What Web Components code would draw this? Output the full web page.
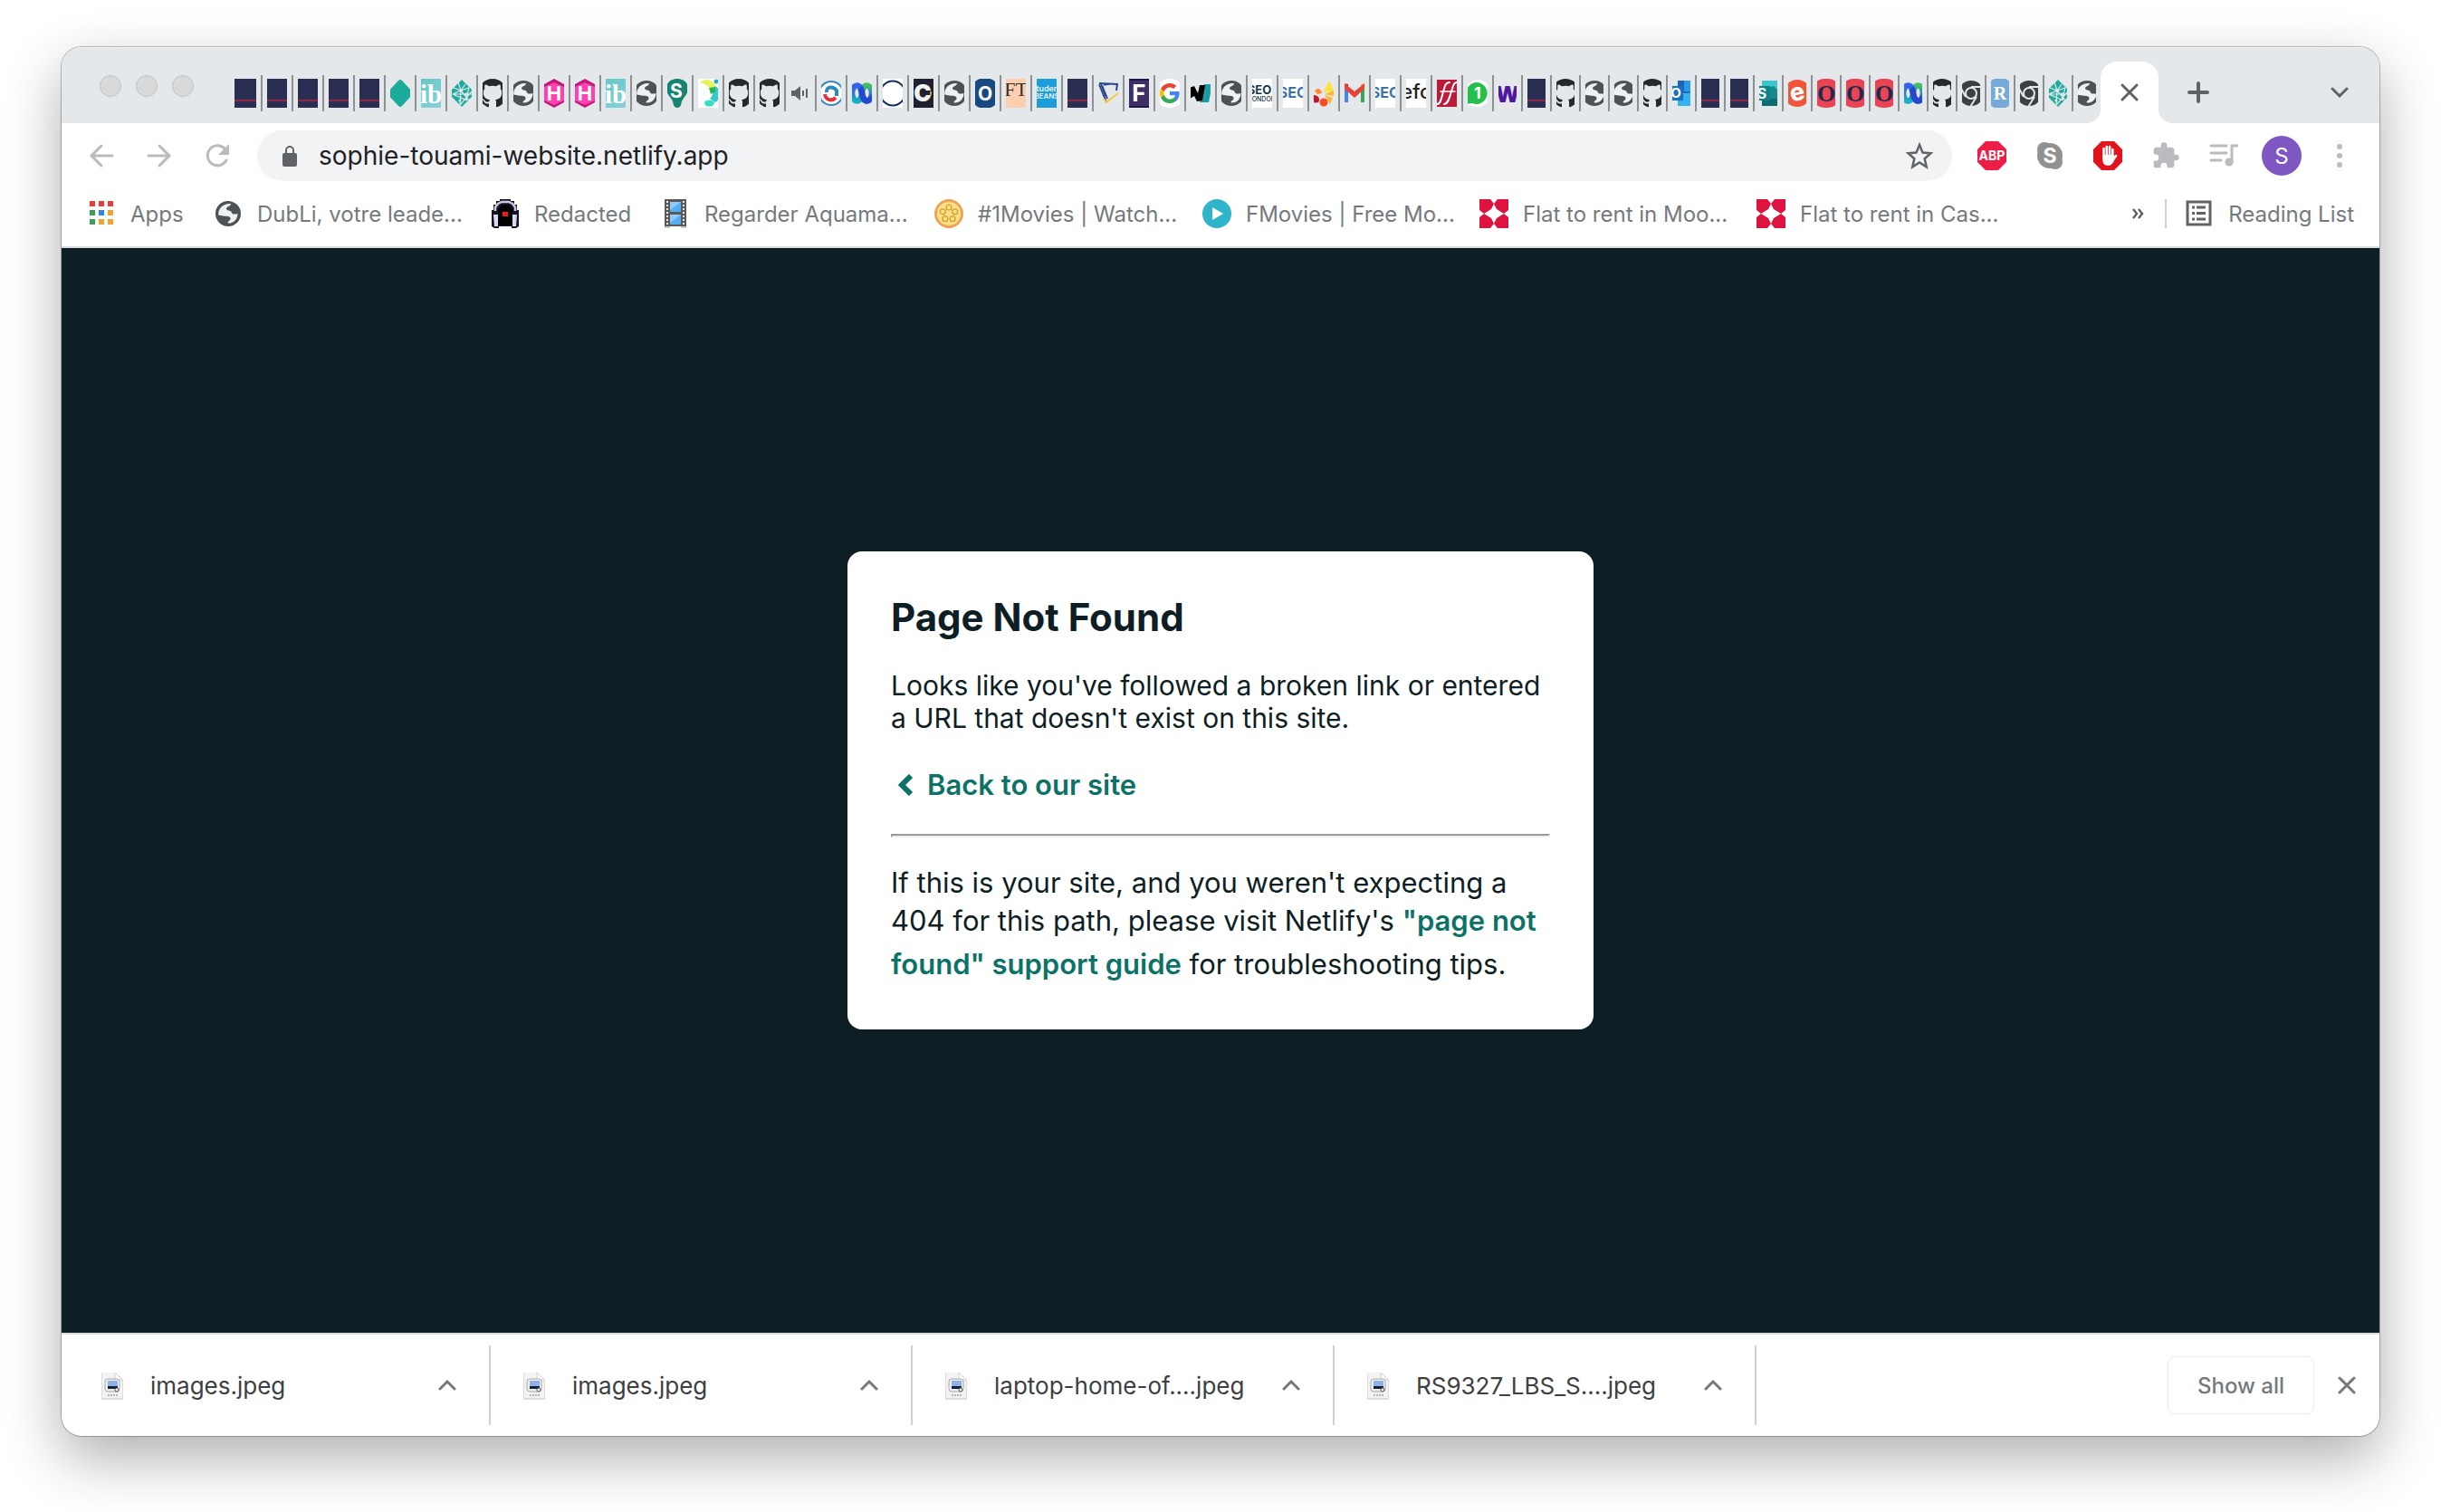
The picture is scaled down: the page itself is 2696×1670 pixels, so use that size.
<!DOCTYPE html>
<html lang="en">
<head>
<meta charset="utf-8">
<title>Page Not Found</title>
<style>
  body { margin: 0; background: #fff; font-family: Inter, "Liberation Sans", sans-serif; color: #0e1e25; }
</style>
</head>
<body>
<browser-window>
  <tab-strip slot="top"></tab-strip>
  <tool-bar slot="top" url="sophie-touami-website.netlify.app"></tool-bar>
  <bookmarks-bar slot="top">
    <book-mark icon="apps" style="--w:140px">Apps</book-mark>
    <book-mark icon="globe" style="--w:306px">DubLi, votre leade...</book-mark>
    <book-mark icon="robot" style="--w:188px">Redacted</book-mark>
    <book-mark icon="film" style="--w:302px">Regarder Aquama...</book-mark>
    <book-mark icon="reel" style="--w:296px">#1Movies | Watch...</book-mark>
    <book-mark icon="play" style="--w:306px">FMovies | Free Mo...</book-mark>
    <book-mark icon="flat" style="--w:306px">Flat to rent in Moo...</book-mark>
    <book-mark icon="flat" style="--w:306px">Flat to rent in Cas...</book-mark>
  </bookmarks-bar>
  <error-card>
    <span slot="title">Page Not Found</span>
    <span slot="lead">Looks like you've followed a broken link or entered a URL that doesn't exist on this site.</span>
    <span slot="back">Back to our site</span>
  </error-card>
  <download-shelf slot="bottom">
    <download-item>images.jpeg</download-item>
    <download-item>images.jpeg</download-item>
    <download-item>laptop-home-of....jpeg</download-item>
    <download-item>RS9327_LBS_S....jpeg</download-item>
  </download-shelf>
</browser-window>

<script>
const T = (x, y, size, fill, text, extra = '') =>
  `<text x="${x}" y="${y}" font-size="${size}" fill="${fill}" text-anchor="middle" ${extra}>${text}</text>`;
const SANS = 'font-family="Inter, sans-serif" font-weight="700"';
const SERIF = 'font-family="Liberation Serif, serif"';

const ICONS = {
  navy: `<path fill="#292e52" d="M0 0h32v32H0z"/><path fill="#8f2547" d="M0 23h32v2H0z"/>`,
  diamond: `<path fill="#1aab9b" d="M16 1q1 0 2 1l12 13q1 1 0 2L18 30q-2 2-4 0L2 17q-1-1 0-2L14 2q1-1 2-1z"/>`,
  ib: `<defs><linearGradient id="g" x1="0" y1="0" x2="1" y2="1"><stop stop-color="#5fc9c5"/><stop offset="1" stop-color="#8fd0dc"/></linearGradient></defs><path fill="url(#g)" d="M0 0h32v32H0z"/>` + T(16, 27, 29, '#fff', 'ib', SERIF + ' font-weight="700"'),
  netlify: `<path fill="#20a99e" d="M16 1 31 16 16 31 1 16z"/><path fill="none" stroke="#e4e8ea" stroke-width="1.200" d="m12 4 3 9 9-3M15 13l-9 4 22 0M15 13l10 12M15 13l-1 16M6 17l16 7M14 29l13-15M20 6l-5 7-8-3M24 9l-3 15"/><circle cx="15" cy="13" r="1.800" fill="#e4e8ea"/><circle cx="21" cy="17" r="1.800" fill="#e4e8ea"/><circle cx="14" cy="24" r="1.500" fill="#e4e8ea"/>`,
  github: `<path fill="#24292e" transform="scale(2)" d="M8 0C3.580 0 0 3.580 0 8c0 3.540 2.290 6.530 5.470 7.590.4.070.55-.17.55-.38 0-.19-.01-.82-.01-1.490-2.010.37-2.530-.49-2.690-.94-.09-.23-.48-.94-.82-1.130-.28-.15-.68-.52-.01-.53.63-.01 1.080.58 1.230.82.72 1.210 1.870.87 2.330.66.07-.52.28-.87.51-1.070-1.780-.2-3.640-.89-3.640-3.950 0-.87.31-1.590.82-2.150-.08-.2-.36-1.020.08-2.120 0 0 .67-.21 2.200.82.64-.18 1.320-.27 2-.27s1.360.09 2 .27c1.530-1.040 2.200-.82 2.200-.82.44 1.100.16 1.920.08 2.120.51.56.82 1.270.82 2.150 0 3.070-1.870 3.750-3.650 3.950.29.25.54.73.54 1.480 0 1.070-.01 1.930-.01 2.200 0 .21.15.46.55.38A8.010 8.010 0 0 0 16 8c0-4.420-3.580-8-8-8z"/>`,
  globe: `<circle cx="16" cy="16" r="14" fill="#4d5257"/><path fill="#eef0f1" d="M5.300 17.500C4.500 10 11 4 19 5c0 3-5 3-5 5.500 0 2.500 5 1.500 5.500 3.500.5 3 3.500 3 7 2 0 6-4.500 11-10.800 10.500-.7-2.500 3.300-2.500 2.800-5.500-.5-3-5.500-1.500-13.200-3.500z"/>`,
  hex: `<path fill="#c4177b" d="M16 0 29 7v18L16 32 3 25V7z"/><path fill="#ff41b0" d="M16 4 29 10v13l-13 6L3 23V10z"/>` + T(16, 24, 22, '#fff', 'H', SANS),
  pinS: `<path fill="#178473" d="M16 0C9 0 4 4 4 11c0 6 5 9 7 14 1 5 2 7 5 7s4-2 5-7c2-5 7-8 7-14C28 4 23 0 16 0z"/>` + T(15, 21, 21, '#fff', 'S', SANS),
  splash: `<path fill="#fff" d="M0 0h32v32H0z"/><path fill="#e8f35c" d="M7 4C13-2 23 1 25 10l-6 4C18 8 13 6 7 4z"/><path fill="#35c7c9" d="M24 8c7 4 7 14 0 18l-6-4c3-3 4-7 3-10z"/><path fill="#27b84f" d="m17 10 7-1 0 5-5 3z"/><path fill="#38dfc2" d="M14 24q8-2 9 3-2 5-9 3-4-4 0-6z"/><circle cx="25" cy="3" r="2.500" fill="#25aac9"/>`,
  speaker: `<path fill="#5f6368" d="M6 13h4l6-5v16l-6-5H6z"/><path stroke="#5f6368" stroke-width="2" d="M19 13v6M23 11v10"/>`,
  swirl: `<circle cx="16" cy="16" r="14" fill="#3887bd"/><circle cx="16" cy="16" r="12" fill="#fff"/><path fill="none" stroke="#2e8cc0" stroke-width="4" d="M11 15c-1-7 8-7 11-2v6"/><path fill="none" stroke="#e8303a" stroke-width="4" d="M9 17c1 7 8 8 12 4"/>`,
  webex: `<defs><linearGradient id="a" x1="0" y1="0" x2="0" y2="1"><stop stop-color="#2f63f0"/><stop offset=".5" stop-color="#2a78e0"/><stop offset="1" stop-color="#17b3c4"/></linearGradient><linearGradient id="b" x1="0" y1="0" x2="0" y2="1"><stop stop-color="#45bd62"/><stop offset=".45" stop-color="#2f8fb0"/><stop offset=".7" stop-color="#2450d8"/><stop offset="1" stop-color="#2349cf"/></linearGradient></defs><ellipse cx="21.500" cy="16" rx="5.500" ry="8.500" fill="none" stroke="url(#b)" stroke-width="6.500"/><ellipse cx="10.500" cy="16" rx="5.500" ry="8.500" fill="none" stroke="url(#a)" stroke-width="6.500"/><path fill="none" stroke="#2349cf" stroke-width="6.500" d="M14 10c3 4 1 14 8 14.500"/>`,
  ring: `<path fill="#fff" d="M0 0h32v32H0z"/><circle cx="16" cy="16" r="13.500" fill="none" stroke="#12305f" stroke-width="2"/>`,
  cdark: `<path fill="#1f2030" d="M0 0h32v32H0z"/>` + T(15, 25, 26, '#f3f1ee', 'C', 'font-family="Inter" font-weight="900"') + `<path fill="#b99b62" d="M23 14h2v4h-2z"/>`,
  oblue: `<circle cx="16" cy="16" r="17" fill="#174a82"/>` + T(16, 24, 21, '#fff', 'O', SANS),
  ft: `<path fill="#fccfb1" d="M0 0h32v32H0z"/>` + T(16, 19, 22, '#33302e', 'FT', SERIF),
  student: `<path fill="#1b9dd9" d="M0 0h32v32H0z"/>` + T(16, 14, 9, '#fff', 'student', 'font-family="Inter" font-weight="500"') + T(16, 22, 8, '#fff', 'BEANS', 'font-family="Inter" font-weight="500"'),
  book: `<path fill="none" stroke="#2b478c" stroke-width="2" d="m6 5 20 1-1 7M6 6l8 20M9 7l6 15"/><path fill="none" stroke="#2b478c" stroke-width="1.500" d="m8 6 5 13M11 7l6-1"/><path fill="none" stroke="#f2c94c" stroke-width="2" d="m11 22 3 4 13-10"/>`,
  fdark: `<path fill="#3d2f66" d="M0 0h32v32H0z"/><path fill="#1f1645" d="M0 0h32v2H0zM0 30h32v2H0z"/>` + T(16, 25, 26, '#fff', 'F', SANS),
  google: `<circle cx="16" cy="16" r="16" fill="#fff"/><g transform="translate(4 4)"><path fill="#4285F4" d="M22.560 12.250c0-.78-.07-1.530-.2-2.250H12v4.260h5.920c-.26 1.370-1.040 2.530-2.210 3.310v2.770h3.570c2.080-1.920 3.280-4.740 3.280-8.090z"/><path fill="#34A853" d="M12 23c2.970 0 5.460-.98 7.280-2.660l-3.570-2.770c-.98.66-2.230 1.060-3.710 1.060-2.860 0-5.290-1.930-6.160-4.530H2.180v2.840C3.990 20.530 7.700 23 12 23z"/><path fill="#FBBC05" d="M5.840 14.090c-.22-.66-.35-1.360-.35-2.090s.13-1.430.35-2.090V7.070H2.180C1.430 8.550 1 10.220 1 12s.43 3.450 1.180 4.930z"/><path fill="#EA4335" d="M12 5.380c1.620 0 3.060.56 4.210 1.640l3.150-3.150C17.450 2.090 14.970 1 12 1 7.700 1 3.990 3.470 2.180 7.070l3.660 2.840c.87-2.600 3.300-4.530 6.160-4.530z"/></g>`,
  wteal: `<path fill="#1a9ba3" d="M20 6h9l-4 20H15z"/><path fill="#000" d="M4 10l5-2 4 8 2-9h6l-3 17-6 1-3-6-5 3z"/>`,
  seol: `<path fill="#fff" d="M0 0h32v32H0z"/>` + T(13, 17, 13, '#17364a', 'SEO', SANS) + T(16, 25, 7, '#17364a', 'LONDON', 'font-family="Inter" font-weight="500"'),
  seo: `<path fill="#fff" d="M0 0h32v32H0z"/>` + T(16, 21, 16, '#3b73ad', 'SEO', SANS),
  fruit: `<path fill="#ffe23d" d="m22 2 5 11-12 2z"/><path fill="#ffb92e" d="m17 17 11-5q1 6-2 7zM17 18l9 3-3 7z"/><path fill="#ff8a33" d="M6 13q6-5 8 3l-5 1z"/><circle cx="16" cy="26" r="4.500" fill="#ff4b23"/><path fill="#c4152d" d="M3 18q8 0 8 5t-6 3z"/>`,
  gmail: `<path fill="#4285f4" d="M4 9h5v17H4z"/><path fill="#34a853" d="M23 9h5v17h-5z"/><path fill="#fbbc04" d="M23 6q5-2 5 4l-5 4z"/><path fill="#c5221f" d="M4 10q0-6 5-4v8z"/><path fill="#ea4335" d="m5 5 11 9L27 5v6L16 21 5 11z"/>`,
  efc: `<path fill="#fff" d="M0 0h32v32H0z"/>` + T(16, 22, 22, '#222', 'efc', 'font-family="Inter" font-weight="500"'),
  ff: `<path fill="#bd1a38" d="M0 1h32v30H0z"/><g fill="none" stroke="#fff" stroke-linecap="round"><path stroke-width="2" d="M5 28c5 0 5-9 8-17 1-5 3-7 6-7M13 28c5 0 6-9 9-17 1-5 3-7 5-7"/><path stroke-width="1.500" d="M9 14h16"/></g>`,
  whatsapp: `<path fill="#fff" d="M16 1a15 15 0 1 1-8 28l-6 2V16A15 15 0 0 1 16 1z"/><path fill="#25c04b" d="M16 4a12 12 0 1 1-6 23l-6 1 1-6A12 12 0 0 1 16 4z"/>` + T(16, 22, 18, '#fff', '1', SANS),
  wpurple: T(16, 26, 25, '#5017a0', 'W', 'font-family="Inter" font-weight="900"'),
  outlook: `<path fill="#1c66b5" d="M12 2h18v14H12z"/><path fill="#2b9be6" d="M19 2h11v12H19z"/><path fill="#35b3f1" d="M12 17l18-2v15H12z"/><path fill="#1571c2" d="M0 8h18v16H0z"/>` + T(10, 21, 15, '#fff', 'O', SANS),
  sway: `<path fill="#3ec6cf" d="M9 2h21v14H9z"/><path fill="#17898c" d="M9 13l13-5 8 8v8H9z"/><path fill="#0d6c70" d="M9 22h21v8H9z"/><path fill="#0a8387" d="M0 8h18v16H0z"/>` + T(9, 22, 16, '#fff', 'S', SANS),
  ered: `<circle cx="16" cy="16" r="15" fill="#f05537"/>` + T(16, 24, 27, '#fff', 'e', 'font-family="Inter" font-weight="800" transform="rotate(-12 16 16)"'),
  ored: `<rect width="32" height="32" rx="14" fill="#ea4453"/>` + T(16, 25, 26, '#222850', 'O', SERIF + ' font-weight="700"'),
  chrome: `<circle cx="16" cy="16" r="14" fill="#3c4043"/><path fill="none" stroke="#e4e8ea" stroke-width="2" d="M16 9h13M10 20 4 9M22 20l-7 11"/><circle cx="16" cy="16" r="7" fill="#e4e8ea"/><circle cx="16" cy="16" r="5" fill="#3c4043"/>`,
  rblue: `<circle cx="16" cy="16" r="17" fill="#75aadb"/>` + T(16, 23, 20, '#fff', 'R', SERIF + ' font-weight="700"'),

  apps: ['#e53e3e','#e53e3e','#e53e3e','#3d9c5b','#2f85e8','#eba52f','#3d9c5b','#eba52f','#eba52f']
    .map((c, i) => `<path fill="${c}" d="M${3 + i % 3 * 10} ${2 + Math.floor(i / 3) * 10}h6v6h-6z"/>`).join(''),
  robot: `<path fill="#15151f" d="M10 0h12v2h4v4h3v6h2v18l-3 2h-5v-2H9v2H4l-3-2V12h2V6h3V2h4z"/><path fill="none" stroke="#c9c8e6" stroke-width="2.500" d="M5 13V9l3-4 4-2h8l4 2 3 4v4"/><path fill="#000" d="M8 12l4-6h8l4 6v17H8z"/><path fill="#d9d8f5" d="M3 17h5v13H4zM24 17h5l-1 13h-4z"/><path fill="#f01818" d="M13 14h6v5h-6z"/>`,
  film: `<path fill="#5b5856" d="M4 0h24v30H4z"/><path fill="#56aef2" d="M10 3h12v11H10zM10 17h12v11H10z"/><path fill="#8fcbfa" d="M10 3h12L10 12zM10 17h12L10 26z"/><path stroke="#e8e8e8" stroke-width="2" stroke-dasharray="2 2" d="M7 2v28M25 2v28"/><path fill="#c9c9c9" d="M4 30h6v2H4zM22 30h6v2h-6z"/>`,
  reel: `<circle cx="16" cy="16" r="14.500" fill="#fbe08a" stroke="#f0a552" stroke-width="3"/><g fill="#f7e36a" stroke="#cf9a3c" stroke-width="1.200"><circle cx="16" cy="9" r="3"/><circle cx="9.300" cy="13.800" r="3"/><circle cx="22.700" cy="13.800" r="3"/><circle cx="11.900" cy="21.700" r="3"/><circle cx="20.100" cy="21.700" r="3"/></g>`,
  play: `<circle cx="16" cy="16" r="16" fill="#2fb4c9"/><path fill="#fff" d="M11 9l12 7-12 7z"/>`,
  flat: `<path fill="#dc143f" d="M0 0h12l4 5 4-5h12v12l-5 4 5 4v12H20l-4-5-4 5H0V20l5-4-5-4z"/><path fill="#fff" d="m16 5 3 6 8 5-8 5-3 6-3-6-8-5 8-5z"/>`,

  back: `<path class="l" d="M28 16H5M16 5 5 16l11 11"/>`,
  forward: `<path class="l" d="M4 16h23M16 5l11 11-11 11"/>`,
  reload: `<path class="l" d="M26 21a11 11 0 1 1-2-13"/><path fill="currentColor" d="M29 3v12H17z"/>`,
  lock: `<rect x="8" y="13" width="16" height="15" rx="2" fill="currentColor"/><path fill="none" stroke="currentColor" stroke-width="2" d="M12 13v-3a4 4 0 0 1 8 0v3"/>`,
  star: `<path fill="none" stroke="currentColor" stroke-width="2.500" d="m16 4 3.500 8.500 9 .8-6.800 6 2 9L16 23.500 8.300 28.300l2-9-6.800-6 9-.8z"/>`,
  abp: `<path fill="#ed1e45" d="M9 0h14l9 9v14l-9 9H9l-9-9V9z"/>` + T(16, 21, 14, '#fff', 'ABP', SANS),
  skype: `<g fill="#919191"><circle cx="16" cy="16" r="14"/><circle cx="10" cy="9" r="8"/><circle cx="22" cy="23" r="8"/></g>` + T(16, 24, 23, '#fff', 'S', SANS),
  hand: `<path fill="#e3131b" d="M9 0h14l9 9v14l-9 9H9l-9-9V9z"/><path fill="none" stroke="#fff" stroke-width="2.600" stroke-linecap="round" d="M11.500 18V8M14.800 17V6M18.100 17V6M21.300 18V9M21 22l4-6"/><path fill="#fff" d="M10.200 15h12.400l.4 4q-1 8-7 8-5.800 0-5.800-7z"/>`,
  puzzle: `<path fill="currentColor" transform="scale(1.333)" d="M20.500 11H19V7c0-1.100-.9-2-2-2h-4V3.500a2.500 2.500 0 0 0-5 0V5H4c-1.100 0-2 .9-2 2v3.800h1.500a2.700 2.700 0 0 1 0 5.400H2V20c0 1.100.9 2 2 2h3.800v-1.500a2.700 2.700 0 0 1 5.400 0V22H17c1.100 0 2-.9 2-2v-4h1.500a2.500 2.500 0 0 0 0-5z"/>`,
  music: `<path fill="none" stroke="currentColor" stroke-width="3" stroke-linecap="round" d="M2 5h17M2 13h17M2 21h11M25 23V5h6"/><circle cx="22" cy="23" r="4.500" fill="currentColor"/>`,
  dots: `<g fill="currentColor"><circle cx="16" cy="6" r="3"/><circle cx="16" cy="16" r="3"/><circle cx="16" cy="26" r="3"/></g>`,
  list: `<path fill="none" stroke="currentColor" stroke-width="3" d="M3 3h25v25H3z"/><path stroke="currentColor" stroke-width="3" d="M8 9h3M8 15.500h3M8 22h3M13 9h10M13 15.500h10M13 22h10"/>`,
  close: `<path class="l" d="m8 8 16 16M24 8 8 24"/>`,
  plus: `<path class="l" style="stroke-width:4" d="M16 6v20M6 16h20"/>`,
  down: `<path class="l" d="m8 12 8 8 8-8"/>`,
  up: `<path class="l" d="m8 20 8-8 8 8"/>`,
  more: `<path fill="none" stroke="currentColor" stroke-width="2.500" d="m11 11 4 5-4 5M17 11l4 5-4 5"/>`,
  chev: `<path fill="none" stroke="currentColor" stroke-width="6" d="M22 6 12 16l10 10"/>`,
  jpeg: `<path fill="#dcdcdc" d="M4 2h15l9 8v22H4z"/><path fill="#f3f3f3" d="M5 2h14v8h8v20H5z"/><path fill="#fff" stroke="#d0d0d0" d="M19 2v8h8z"/><rect x="8" y="9" width="16" height="14" rx="3" fill="#eee" stroke="#aaa"/><path fill="#8db1e8" d="M11 11h11v7H11z"/><path fill="#16203a" d="M11 17h11v3H11z"/><circle cx="21" cy="21" r="2" fill="#fff" stroke="#555"/><path stroke="#b5b5b5" stroke-width="2" stroke-dasharray="2 1" d="M11 27h11"/>`
};

const define = (name, css, html) => customElements.define(name, class extends HTMLElement {
  connectedCallback() {
    if (this.shadowRoot) return;
    const root = this.attachShadow({ mode: 'open' });
    root.innerHTML = `<style>:host,*{box-sizing:border-box}button{font:inherit;color:inherit;background:none;border:0;padding:0;display:flex;align-items:center;justify-content:center}${css}</style>` +
      (typeof html === 'function' ? html(this) : html);
  }
});

define('ui-icon',
  `:host{display:block;flex:none;width:32px;height:32px}
   svg{display:block;width:100%;height:100%}
   .l{fill:none;stroke:currentColor;stroke-width:3;stroke-linecap:round}`,
  el => `<svg viewBox="0 0 32 32" preserveAspectRatio="xMidYMid slice" aria-hidden="true">${ICONS[el.getAttribute('name')]}</svg>`);

define('browser-window',
  `:host{display:flex;min-height:100vh;padding:52px 68px 84px}
   .frame{flex:1;display:flex;flex-direction:column;overflow:hidden;border-radius:22px;background:#fff;
     box-shadow:0 0 0 1px rgba(0,0,0,.25),0 24px 64px rgba(0,0,0,.32)}
   main{flex:1;display:flex;align-items:center;justify-content:center;background:#0e1e25;border:solid #d9dcdf;border-width:2px 0}`,
  `<div class="frame"><slot name="top"></slot><main><slot></slot></main><slot name="bottom"></slot></div>`);

const TABS = ('navy navy navy navy navy diamond ib netlify github globe hex hex ib globe pinS splash github github speaker ' +
  'swirl webex ring cdark globe oblue ft student navy book fdark google wteal globe seol seo fruit gmail seo efc ff whatsapp ' +
  'wpurple navy github globe globe github outlook navy navy sway ered ored ored ored webex github chrome rblue chrome netlify globe').split(' ');

define('tab-strip',
  `:host{display:flex;height:84px;background:#e4e8ea;color:#5f6368;border-top:1px solid #f3f5f6}
   .lights{display:flex;gap:16px;padding:30px 0 0 42px;width:186px}
   .lights i{width:24px;height:24px;border-radius:50%;background:#d8d9da;border:1px solid #bfc0c1}
   .tabs{display:flex;padding-top:30px}
   .tab{height:40px;padding:0 5px;border-right:2px solid #8e9193}
   .tab ui-icon{width:22px}
   .tab:first-child ui-icon{width:24px}
   .tab.narrow ui-icon{width:20px}
   .tab:last-child{border-right:0}
   .active{position:relative;margin-top:15px;width:64px;border-radius:18px 18px 0 0;background:#fff}
   .active::before,.active::after{content:"";position:absolute;bottom:0;width:16px;height:16px}
   .active::before{right:100%;background:radial-gradient(circle at 0 0,transparent 16px,#fff 16px)}
   .active::after{left:100%;background:radial-gradient(circle at 100% 0,transparent 16px,#fff 16px)}
   .new{margin-top:15px;padding:0 28px}
   .search{margin:15px 0 0 auto;padding-right:28px}`,
  () => `<div class="lights"><i></i><i></i><i></i></div><div class="tabs">${TABS.map((n, i) =>
      `<button class="tab${i > 40 ? ' narrow' : ''}" aria-label="Tab ${i + 1}"><ui-icon name="${n}"></ui-icon></button>`).join('')}</div>
    <button class="active" aria-label="Close tab"><ui-icon name="close"></ui-icon></button>
    <button class="new" aria-label="New tab"><ui-icon name="plus"></ui-icon></button>
    <button class="search" aria-label="Search tabs"><ui-icon name="down"></ui-icon></button>`);

define('tool-bar',
  `:host{display:flex;align-items:center;gap:32px;height:72px;padding:0 28px;color:#b9bbbe}
   .box{flex:1;display:flex;align-items:center;gap:16px;height:56px;margin:0 -4px;padding:0 20px;border-radius:28px;background:#f1f3f4;color:#5f6368}
   input{flex:1;min-width:0;border:0;background:none;font:28px Inter,sans-serif;color:#202124;padding:0;outline:0}
   .avatar{width:44px;height:44px;border-radius:50%;background:#7e57c2;color:#fff;font-size:24px;margin:0 -6px}`,
  el => `<button aria-label="Back"><ui-icon name="back"></ui-icon></button>
    <button aria-label="Forward"><ui-icon name="forward"></ui-icon></button>
    <button aria-label="Reload"><ui-icon name="reload"></ui-icon></button>
    <div class="box"><ui-icon name="lock"></ui-icon><input aria-label="Address" value="${el.getAttribute('url')}"><button aria-label="Bookmark"><ui-icon name="star"></ui-icon></button></div>
    <button aria-label="Adblock Plus"><ui-icon name="abp"></ui-icon></button>
    <button aria-label="Skype"><ui-icon name="skype"></ui-icon></button>
    <button aria-label="AdBlock"><ui-icon name="hand"></ui-icon></button>
    <button aria-label="Extensions"><ui-icon name="puzzle"></ui-icon></button>
    <button aria-label="Media"><ui-icon name="music"></ui-icon></button>
    <button class="avatar" aria-label="Profile">S</button>
    <button aria-label="Menu"><ui-icon name="dots"></ui-icon></button>`);

define('bookmarks-bar',
  `:host{display:flex;align-items:center;height:64px;padding:0 28px 8px;color:#75797d;font-size:24px}
   .more{margin-left:auto;color:#5f6368}
   .list{gap:16px;margin-left:14px;padding-left:20px;height:32px;border-left:2px solid #d0d2d4}
   .list ui-icon{color:#5f6368}`,
  `<slot></slot><button class="more" aria-label="More bookmarks"><ui-icon name="more"></ui-icon></button>
   <button class="list"><ui-icon name="list"></ui-icon>Reading List</button>`);

define('book-mark',
  `:host{display:block;width:var(--w);flex:0 1 auto;min-width:0}
   a{display:flex;align-items:center;gap:16px;color:inherit;text-decoration:none;white-space:nowrap}`,
  el => `<a href="#"><ui-icon name="${el.getAttribute('icon')}"></ui-icon><span><slot></slot></span></a>`);

define('error-card',
  `:host{display:block;width:824px;max-width:90%;padding:48px;border-radius:16px;background:#fff;font-size:31px;line-height:36px}
   h1{margin:0;font-size:42px;line-height:50px;font-weight:700}
   p{margin:32px 0 0}
   .lead{font-size:30px}
   a{color:#0c7268;font-weight:600;text-decoration:none;line-height:48px}
   .back{display:flex;align-items:center;gap:8px}
   .back ui-icon{width:32px;height:24px}
   hr{margin:30px 0 32px;border:2px inset #eee}`,
  `<h1><slot name="title"></slot></h1><p class="lead"><slot name="lead"></slot></p>
   <p><a class="back" href="#"><ui-icon name="chev"></ui-icon><slot name="back"></slot></a></p>
   <hr><p>If this is your site, and you weren't expecting a 404 for this path, please visit Netlify's <a href="#">"page not found" support guide</a> for troubleshooting tips.</p>`);

define('download-shelf',
  `:host{display:flex;align-items:center;height:112px;padding:0 20px 0 8px;color:#75797d}
   .all{margin-left:auto;width:162px;height:64px;border:1px solid #ececee;border-radius:8px;font-size:24px;font-weight:500}
   .x{margin-left:20px}`,
  `<slot></slot><button class="all">Show all</button><button class="x" aria-label="Close downloads"><ui-icon name="close"></ui-icon></button>`);

define('download-item',
  `:host{display:flex;align-items:center;width:466px;height:88px;padding:0 30px 0 32px;border-right:2px solid #cfd1d3}
   .name{flex:1;color:#3c4043;font-size:26px;justify-content:flex-start;gap:26px;white-space:nowrap}`,
  `<button class="name"><ui-icon name="jpeg"></ui-icon><slot></slot></button><button aria-label="File options"><ui-icon name="up"></ui-icon></button>`);
</script>
</body>
</html>
